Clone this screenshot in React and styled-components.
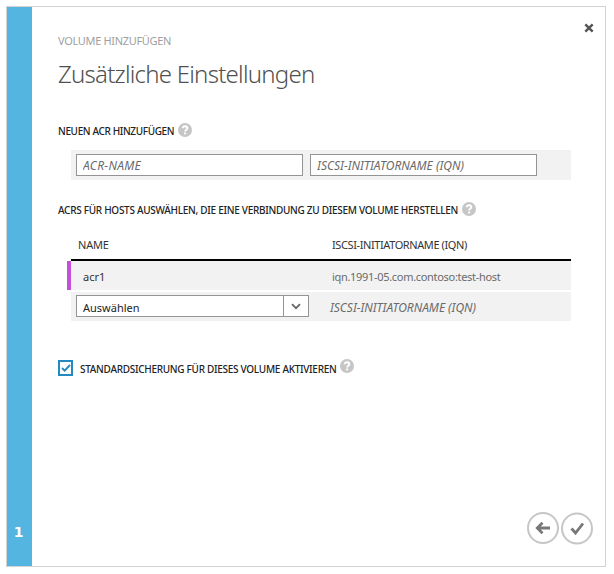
import React from "react";
import styled, { createGlobalStyle } from "styled-components";

const GlobalStyle = createGlobalStyle`
  *, *::before, *::after { box-sizing: border-box; }
  body {
    margin: 0;
    background: #fff;
    font-family: "Noto Sans", "Open Sans", sans-serif;
    font-size: 11px;
    color: #333;
  }
`;

const Dialog = styled.section`
  display: flex;
  width: 600px;
  height: 561px;
  margin: 6px 0 0 6px;
  border: 1px solid #d2d2d2;
  background: #fff;
`;

const StepRail = styled.aside`
  display: flex;
  flex: 0 0 25px;
  align-items: flex-end;
  justify-content: center;
  padding: 0 2px 24px 0;
  background: #54b5e0;
  color: #fff;
  font: bold 14px/20px "DejaVu Sans", sans-serif;
`;

const Main = styled.main`
  display: flex;
  flex: 1;
  flex-direction: column;
  padding: 16px 11px 21px 26px;
`;

const Header = styled.header`
  display: flex;
  align-items: flex-start;
  justify-content: space-between;
  height: 98px;
`;

const Titles = styled.div`
  padding-top: 8px;
  white-space: nowrap;
`;

const Eyebrow = styled.div`
  color: #a0a0a0;
  font-size: 11px;
  line-height: 20px;
  letter-spacing: -0.32px;
`;

const Title = styled.h1`
  margin: 7px 0 0;
  color: #505050;
  font-size: 24px;
  font-weight: 300;
  line-height: 32px;
  letter-spacing: -0.76px;
`;

const IconButton = styled.button`
  display: flex;
  padding: 0;
  border: 0;
  background: none;
`;

const Label = styled.div`
  display: flex;
  align-items: center;
  height: 20px;
  color: #222;
  font-size: 10px;
  font-weight: 500;
  white-space: nowrap;
  letter-spacing: ${(p) => p.$track || 0}px;
`;

const HelpIcon = styled.svg`
  flex: none;
  width: 14px;
  height: 14px;
  margin: 0 0 ${(p) => p.$lift || 3}px 4px;
`;

const Strip = styled.div`
  display: flex;
  gap: 7px;
  width: 500px;
  height: 30px;
  margin: 9px 0 20px 13px;
  padding: 4px 5px;
  background: #f2f2f2;
`;

const TextInput = styled.input`
  width: 227px;
  height: 22px;
  padding: 1px 6px 0;
  border: 1px solid #949494;
  border-radius: 0;
  background: #fff;
  font: italic 12px "Noto Sans", sans-serif;
  letter-spacing: ${(p) => p.$track || 0}px;
  &::placeholder { color: #6a6a6a; opacity: 1; }
`;

const Table = styled.div`
  width: 504px;
  margin: 10px 0 36px 9px;
`;

const Row = styled.div`
  display: grid;
  grid-template-columns: 238px 1fr;
  column-gap: 14px;
  align-items: center;
  height: 29px;
  margin-bottom: 2px;
  margin-left: 4px;
  padding-left: 5px;
  background: #f2f2f2;
`;

const SelectedRow = styled(Row)`
  margin-left: 0;
  border-left: 4px solid #c44fd8;
`;

const HeadRow = styled(Row)`
  height: 31px;
  margin-bottom: 0;
  border-bottom: 2px solid #000;
  background: none;
`;

const Cell = styled.span`
  padding-left: ${(p) => p.$inset || 0}px;
  padding-top: ${(p) => p.$drop || 0}px;
  color: ${(p) => p.$color || "#333"};
  font-size: ${(p) => (p.$italic ? 12 : 11)}px;
  font-style: ${(p) => (p.$italic ? "italic" : "normal")};
  letter-spacing: ${(p) => p.$track || 0}px;
  white-space: nowrap;
`;

const Select = styled.button`
  display: flex;
  align-items: stretch;
  width: 233px;
  height: 22px;
  margin-bottom: 1px;
  padding: 0;
  border: 1px solid #949494;
  background: #fff;
  color: #222;
  font: 11px/22px "Noto Sans", sans-serif;
  text-align: left;
`;

const SelectValue = styled.span`
  flex: 1;
  padding: 1px 0 0 6px;
`;

const SelectArrow = styled.span`
  display: flex;
  align-items: center;
  justify-content: center;
  width: 25px;
  border-left: 1px solid #949494;
`;

const CheckRow = styled.div`
  display: flex;
  align-items: center;
`;

const Checkbox = styled.span`
  display: flex;
  align-items: center;
  justify-content: center;
  width: 15px;
  height: 16px;
  margin-right: 7px;
  margin-bottom: 3px;
  border: 2px solid #2289c2;
`;

const Footer = styled.footer`
  display: flex;
  gap: 2px;
  justify-content: flex-end;
  margin-top: auto;
  padding-right: 1px;
`;

const Help = ({ lift }) => (
  <HelpIcon viewBox="0 0 14 14" $lift={lift}>
    <circle cx="7" cy="7" r="7" fill="#c6c6c6" />
    <path d="M4.700 5.300C4.700 3.800 5.700 3.200 7 3.200s2.300.8 2.300 2c0 1.600-2.200 1.600-2.200 3.300" fill="none" stroke="#fff" strokeWidth="1.900" />
    <path d="M6.100 9.500h2v1.900h-2z" fill="#fff" />
  </HelpIcon>
);

export default function App() {
  return (
    <>
      <GlobalStyle />
      <Dialog>
        <StepRail>1</StepRail>
        <Main>
          <Header>
            <Titles>
              <Eyebrow>VOLUME HINZUFÜGEN</Eyebrow>
              <Title>Zusätzliche Einstellungen</Title>
            </Titles>
            <IconButton aria-label="Schließen">
              <svg width="10" height="10" viewBox="0 0 10 10">
                <path d="M1.300 1.300l7.400 7.400M8.700 1.300L1.300 8.700" stroke="#555" strokeWidth="2.400" />
              </svg>
            </IconButton>
          </Header>

          <Label $track={-0.36}>NEUEN ACR HINZUFÜGEN<Help /></Label>
          <Strip>
            <TextInput placeholder="ACR-NAME" $track={0.3} />
            <TextInput placeholder="ISCSI-INITIATORNAME (IQN)" />
          </Strip>

          <Label $track={-0.285}>ACRS FÜR HOSTS AUSWÄHLEN, DIE EINE VERBINDUNG ZU DIESEM VOLUME HERSTELLEN<Help /></Label>
          <Table>
            <HeadRow>
              <Cell $inset={2} $track={-0.2}>NAME</Cell>
              <Cell $inset={4} $track={-0.4}>ISCSI-INITIATORNAME (IQN)</Cell>
            </HeadRow>
            <SelectedRow>
              <Cell $inset={7} $drop={2}>acr1</Cell>
              <Cell $inset={4} $drop={2} $color="#6a6a6a" $track={-0.31}>iqn.1991-05.com.contoso:test-host</Cell>
            </SelectedRow>
            <Row>
              <Select>
                <SelectValue>Auswählen</SelectValue>
                <SelectArrow>
                  <svg width="10" height="7" viewBox="0 0 10 7">
                    <path d="M1 1.200l4 4 4-4" fill="none" stroke="#666" strokeWidth="1.800" />
                  </svg>
                </SelectArrow>
              </Select>
              <Cell $inset={2} $drop={2} $italic $color="#6a6a6a" $track={-0.04}>ISCSI-INITIATORNAME (IQN)</Cell>
            </Row>
          </Table>

          <CheckRow>
            <Checkbox>
              <svg width="10" height="10" viewBox="0 0 10 10">
                <path d="M1 5l2.700 2.700L9 2" fill="none" stroke="#2289c2" strokeWidth="1.900" />
              </svg>
            </Checkbox>
            <Label $track={-0.29}>STANDARDSICHERUNG FÜR DIESES VOLUME AKTIVIEREN<Help lift={7} /></Label>
          </CheckRow>

          <Footer>
            <IconButton aria-label="Zurück">
              <svg width="32" height="33" viewBox="0 0 32 33">
                <circle cx="16" cy="16" r="15" fill="none" stroke="#c6c6c6" strokeWidth="2" />
                <path d="M10 16H23M15.500 10.800L10.300 16l5.200 5.200" fill="none" stroke="#787878" strokeWidth="2.800" />
              </svg>
            </IconButton>
            <IconButton aria-label="Fertig">
              <svg width="32" height="33" viewBox="0 0 32 33">
                <circle cx="16" cy="16.500" r="15" fill="none" stroke="#c6c6c6" strokeWidth="2" />
                <path d="M10.500 16.500l4 4.500L22 11.500" fill="none" stroke="#787878" strokeWidth="2.800" />
              </svg>
            </IconButton>
          </Footer>
        </Main>
      </Dialog>
    </>
  );
}
